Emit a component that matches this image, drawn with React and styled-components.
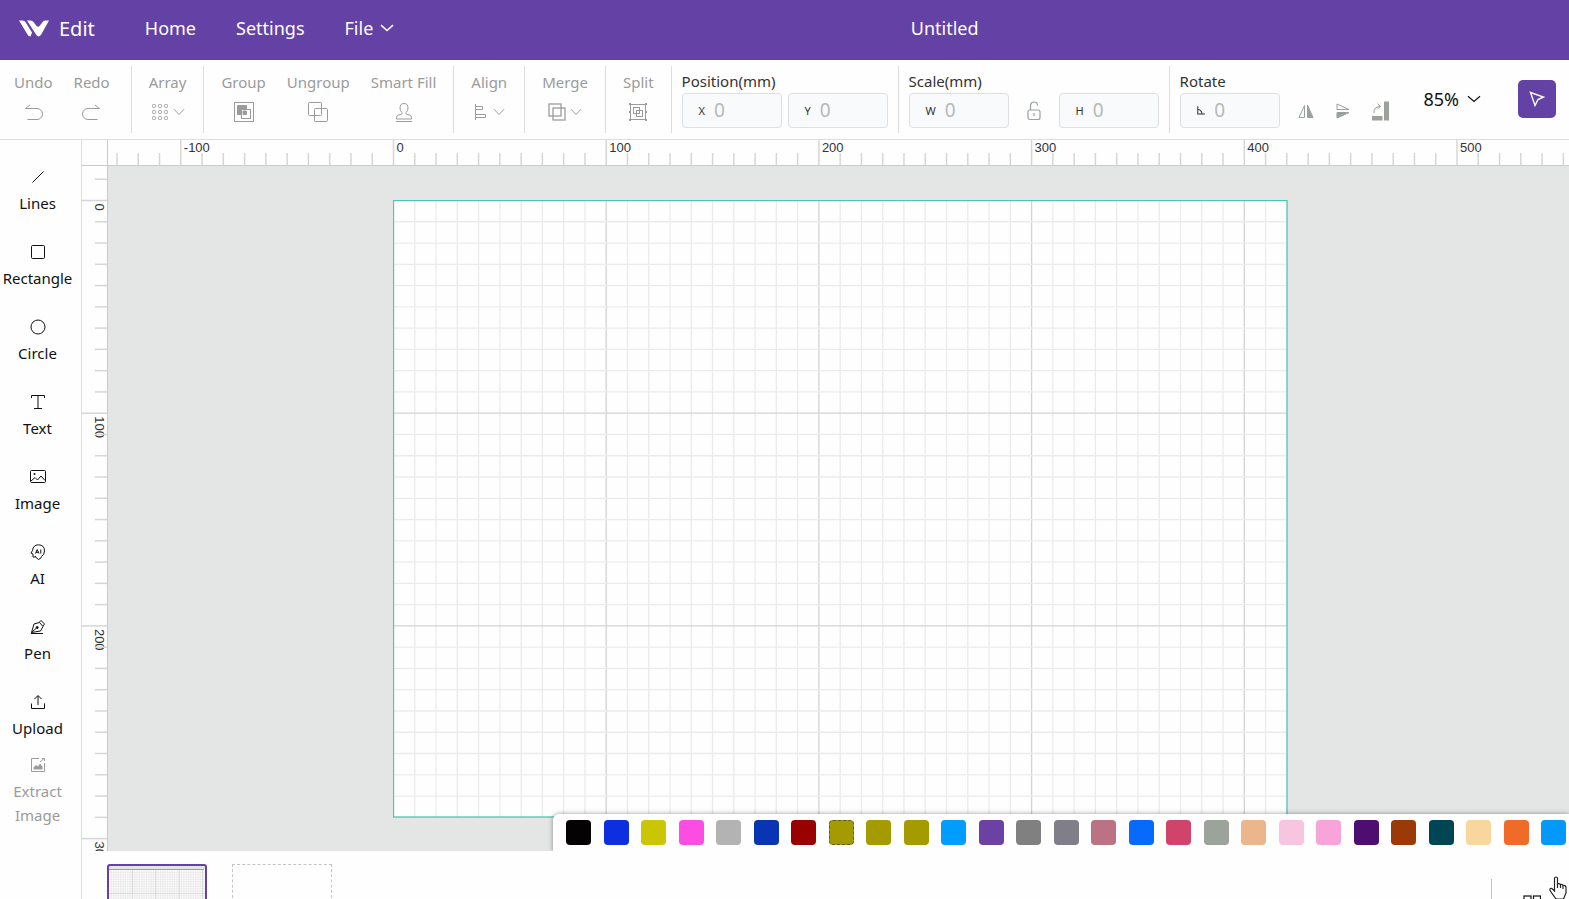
import React from "react";
import styled, { createGlobalStyle } from "styled-components";

//
const GlobalStyle = createGlobalStyle`
  * {
    box-sizing: border-box;
  }
  body {
    margin: 0;
    font-family: "Noto Sans", "Open Sans", sans-serif;
    color: #111;
    background: #fefefe;
    overflow: hidden;
  }
  button, input, select {
    font: inherit;
    color: inherit;
    background: none;
    border: none;
    padding: 0;
    margin: 0;
  }
  button {
    cursor: pointer;
  }
`;

const Container = styled.div`
  height: 100vh;
  display: flex;
  flex-direction: column;
`;

//
//          **    HEADER   ***
//
const Header = styled.header`
  flex: none;
  height: 60px;
  padding: 0 74px 4px 19px;
  background: #6441a5;
  color: #fff;
  display: flex;
  align-items: center;
  font-size: 18px;
`;

const Brand = styled.a`
  display: flex;
  align-items: center;
  gap: 10px;
  margin-right: 50px;
  font-size: 20px;
  color: inherit;
  text-decoration: none;
`;

const Menu = styled.nav`
  display: flex;
  align-items: center;
  gap: 40px;
`;

const MenuLink = styled.a`
  color: inherit;
  text-decoration: none;
`;

const MenuButton = styled.button`
  display: flex;
  align-items: center;
  gap: 7px;
`;

const DocTitle = styled.h1`
  flex: 1;
  margin: 0;
  font-size: 18px;
  font-weight: 400;
  text-align: center;
`;

//
//          **    TOOLBAR   ***
//
const Toolbar = styled.div`
  flex: none;
  height: 80px;
  padding: 6px 13px 6px 0;
  border-bottom: 1px solid #dddddf;
  display: flex;
`;

const ToolGroup = styled.div`
  display: flex;
  gap: 21px;
  padding: 0 17px;
  padding-left: ${(props) => (props.$first ? 14 : 17)}px;
  padding-right: ${(props) => (props.$first ? 21 : 17)}px;
  border-right: 1px solid #dddddf;
`;

const Tool = styled.button`
  display: flex;
  flex-direction: column;
  align-items: center;
  gap: 8px;
  padding-top: 5px;
  font-size: 15px;
  line-height: 22px;
  color: #9b9b9b;
  white-space: nowrap;
`;

const ToolIcon = styled.span`
  height: 22px;
  display: flex;
  align-items: center;
  gap: 4px;
`;

const FieldGroup = styled.div`
  flex: none;
  padding: 3px 10px 0;
  border-right: ${(props) => (props.$last ? "none" : "1px solid #dddddf")};
`;

const FieldTitle = styled.div`
  font-size: 15px;
  line-height: 24px;
  color: #333;
`;

const FieldRow = styled.div`
  display: flex;
  align-items: center;
  gap: ${(props) => props.$gap || 6}px;
`;

const Field = styled.label`
  width: 100px;
  height: 35px;
  padding-left: 16px;
  display: flex;
  align-items: center;
  gap: 9px;
  background: #f9fafc;
  border: 1px solid #dddfe6;
  border-radius: 4px;
  font-size: 11px;
  color: #333;
`;

const FieldInput = styled.input`
  width: 100%;
  min-width: 0;
  height: 30px;
  padding-bottom: 2px;
  font-size: 19px;
  color: #b5bab5;
  outline: none;
`;

const IconButton = styled.button`
  width: 22px;
  display: flex;
  justify-content: center;
  color: #9aa09a;
`;

const ToolbarEnd = styled.div`
  flex: 1;
  display: flex;
  align-items: center;
  justify-content: flex-end;
  gap: 37px;
  padding-bottom: 2px;
`;

const Zoom = styled.label`
  display: flex;
  align-items: center;
  gap: 8px;
  font-size: 18px;
`;

const ZoomSelect = styled.select`
  appearance: none;
  field-sizing: content;
  outline: none;
`;

const PointerButton = styled.button`
  width: 38px;
  height: 38px;
  border-radius: 5px;
  background: #6441a5;
  color: #fff;
  display: flex;
  align-items: center;
  justify-content: center;
`;

//
//          **    BODY   ***
//
const Body = styled.div`
  flex: 1;
  min-height: 0;
  display: flex;
`;

const Sidebar = styled.nav`
  flex: none;
  width: 82px;
  padding: 26px 6px 0 0;
  border-right: 1px solid #dddddf;
  display: flex;
  flex-direction: column;
`;

const SideItem = styled.button`
  flex: none;
  height: ${(props) => (props.$disabled ? 80 : 75)}px;
  margin-top: ${(props) => (props.$disabled ? "-12px" : "0")};
  display: flex;
  flex-direction: column;
  align-items: center;
  gap: 3px;
  font-size: 15px;
  line-height: 24px;
  color: ${(props) => (props.$disabled ? "#9b9b9b" : "#111")};
`;

const Main = styled.main`
  flex: 1;
  min-width: 0;
  display: flex;
  flex-direction: column;
`;

const Workspace = styled.div`
  flex: 1;
  min-height: 0;
  display: grid;
  grid-template: 26px minmax(0, 1fr) / 26px minmax(0, 1fr);
`;

const Corner = styled.div`
  border-right: 1px solid #c9cbcb;
  border-bottom: 1px solid #c9cbcb;
`;

const Ruler = styled.svg`
  display: block;
  width: 100%;
  height: 100%;
  overflow: hidden;
  font-size: 13px;
  font-family: "Liberation Sans", sans-serif;
  border-bottom: ${(props) => (props.$vertical ? "none" : "1px solid #c9cbcb")};
  border-right: ${(props) => (props.$vertical ? "1px solid #c9cbcb" : "none")};
`;

const Canvas = styled.div`
  position: relative;
  overflow: hidden;
  background: #e4e6e5;
`;

const Artboard = styled.svg`
  position: absolute;
  left: 285px;
  top: 34px;
  width: 895px;
  height: 618px;
`;

const Palette = styled.div`
  position: absolute;
  right: 0;
  bottom: 0;
  width: 1016px;
  max-width: 100%;
  height: 37px;
  padding: 0 3px 0 13px;
  display: flex;
  align-items: center;
  justify-content: space-between;
  background: #fefefe;
  border-radius: 6px 0 0 0;
  box-shadow: 0 0 5px rgba(0, 0, 0, 0.4);
`;

const Swatch = styled.button`
  width: 25px;
  height: 25px;
  border-radius: 4px;
  background: ${(props) => props.$color};
  border: ${(props) => (props.$active ? "1px dashed #5c5a20" : "none")};
`;

const Pages = styled.div`
  flex: none;
  height: 48px;
  padding: 13px 28px 0 25px;
  display: flex;
  gap: 25px;
  overflow: hidden;
`;

const PageThumb = styled.button`
  flex: none;
  width: 100px;
  height: 70px;
  display: flex;
  align-items: flex-start;
  overflow: hidden;
  border: ${(props) => (props.$empty ? "1px dashed #c4c4c4" : "2px solid #6441a5")};
  border-radius: ${(props) => (props.$empty ? 0 : 3)}px;
  background: ${(props) => (props.$empty ? "none" : "#e4e6e5")};
`;

const PagesEnd = styled.div`
  height: 50px;
  margin: 15px 0 0 auto;
  padding: 16px 0 0 31px;
  border-left: 1px solid #c4c4c4;
`;

const Cursor = styled.svg`
  position: fixed;
  right: 2px;
  bottom: 0;
  width: 18px;
  height: 23px;
`;

//
//          **    ICONS   ***
//
const Icon = ({ w = 22, h = 22, sw = 1, children }) => (
  <svg
    width={w}
    height={h}
    viewBox={`0 0 ${w} ${h}`}
    fill="none"
    stroke="currentColor"
    strokeWidth={sw}
    aria-hidden="true"
  >
    {children}
  </svg>
);

const Chevron = ({ w = 12, sw = 1 }) => (
  <Icon w={w} h={8} sw={sw}>
    <path d={`M1 1.2 L${w / 2} 6.5 L${w - 1} 1.2`} />
  </Icon>
);

const icons = {
  undo: (
    <Icon>
      <path d="M8 4 L3.5 7.5 H15 a5.5 5.5 0 0 1 0 11 H5.5" />
    </Icon>
  ),
  redo: (
    <Icon>
      <path d="M14 4 L18.5 7.5 H7 a5.5 5.5 0 0 0 0 11 H16.5" />
    </Icon>
  ),
  array: (
    <Icon w={18}>
      {[3.5, 9.5, 15.5].map((y) =>
        [2.5, 8.5, 14.5].map((x) => (
          <rect key={x + "-" + y} x={x - 1} y={y} width="3" height="3" rx="1" />
        ))
      )}
    </Icon>
  ),
  group: (
    <Icon>
      <rect x="1.5" y="1.5" width="19" height="19" />
      <path d="M4.500 4.500 h9 v4 h-5 v5 h-4 z M10 10 h3.500 v3.500 h-3.500z" fill="currentColor" />
      <rect x="8.5" y="8.5" width="9" height="9" />
    </Icon>
  ),
  ungroup: (
    <Icon>
      <rect x="1.5" y="1.5" width="13" height="13" rx="1" />
      <rect x="7.5" y="7.5" width="13" height="13" rx="1" />
    </Icon>
  ),
  fill: (
    <Icon>
      <path d="M3 20.5 H19 M3.5 18 v-1.5 q0-2 2-2.5 l2.5-.5 q1.5-.5 1-2 q-2-1.5-2-4.5 q0-4.5 4-4.5 t4 4.5 q0 3-2 4.5 q-.5 1.5 1 2 l2.5.5 q2 .5 2 2.5 V18 z" />
    </Icon>
  ),
  align: (
    <Icon w={16}>
      <path d="M2.5 3 V19 M2.5 5.5 H9.5 V8.5 H2.5 M2.5 13.5 H12.5 V16.5 H2.5" />
    </Icon>
  ),
  merge: (
    <Icon w={18} sw={1.3}>
      <rect x="1" y="3" width="12" height="12" />
      <rect x="5" y="7" width="12" height="12" />
    </Icon>
  ),
  split: (
    <Icon>
      <rect x="3.5" y="3.5" width="15" height="15" />
      <rect x="6.5" y="6.5" width="6" height="6" />
      <rect x="9.5" y="9.5" width="6" height="6" />
      <path d="M2 3h2M18 3h2M2 19h2M18 19h2M2 11h2M18 11h2" strokeWidth="2" />
    </Icon>
  ),
  lines: (
    <Icon w={16} h={16}>
      <path d="M2.5 13.5 L13.500 2.5" />
    </Icon>
  ),
  rectangle: (
    <Icon w={16} h={16}>
      <rect x="1.5" y="1.5" width="13" height="13" rx="1" />
    </Icon>
  ),
  circle: (
    <Icon w={16} h={16}>
      <circle cx="8" cy="8" r="7" />
    </Icon>
  ),
  text: (
    <Icon w={16} h={16}>
      <path d="M1.5 4 V1.5 H14.5 V4 M8 1.5 V14.5 M4 14.5 H12" />
    </Icon>
  ),
  image: (
    <Icon w={16} h={16}>
      <rect x="0.5" y="1.5" width="15" height="12" rx="1" />
      <path d="M1 12 L5 8.5 L7.5 11 L11 7 L15 11.5" />
      <circle cx="4.5" cy="5" r="1" fill="currentColor" stroke="none" />
    </Icon>
  ),
  ai: (
    <Icon w={16} h={16}>
      <path d="M5.5 12 V13 H3 V10 L1 9 L2.5 6.5 Q3 1 8.5 .8 Q14.5 1 14.5 7 Q14.5 10.5 11.5 12.5 Q11.5 14.5 8.5 15.500 L5.5 13" />
      <path d="M5.5 9.5 L7.2 5.5 L9 9.5 M6 8.3 H8.5 M10.8 5.5 V9.5" />
    </Icon>
  ),
  pen: (
    <Icon w={16} h={16}>
      <path d="M1 14.5 H13 M1.5 13.5 L4 5 L9.5 3.5 L13 7.5 L10.5 12 L1.5 13.5 L6.5 9 M9 3.5 L11 1.5 L14.5 5 L12.8 7.2" />
      <circle cx="7.2" cy="8.5" r="1" fill="currentColor" />
    </Icon>
  ),
  upload: (
    <Icon w={16} h={16}>
      <path d="M8 11 V2 M4.5 5 L8 1.5 L11.5 5 M1.5 9.5 V14.5 H14.5 V9.5" />
    </Icon>
  ),
  extract: (
    <Icon w={16} h={16}>
      <path d="M9 1.5 H1.5 V14.5 H14.5 V6 M10 5 L14 1.5 M12 1.5 H14.5 V4" />
      <path d="M3.5 12.500 V10.500 L6 8 L8 9.500 L10 6.500 L12.500 9.500 V12.500 Z" fill="currentColor" stroke="none" />
    </Icon>
  ),
};

//
//          **    DATA   ***
//
const toolGroups = [
  [["Undo", "undo"], ["Redo", "redo"]],
  [["Array", "array", true]],
  [["Group", "group"], ["Ungroup", "ungroup"], ["Smart Fill", "fill"]],
  [["Align", "align", true]],
  [["Merge", "merge", true]],
  [["Split", "split"]],
];

const sideItems = [
  ["Lines", "lines"],
  ["Rectangle", "rectangle"],
  ["Circle", "circle"],
  ["Text", "text"],
  ["Image", "image"],
  ["AI", "ai"],
  ["Pen", "pen"],
  ["Upload", "upload"],
];

const colors = [
  "#050203", "#0d2fdf", "#cac603", "#fb4de2", "#b3b3b3", "#0934b3", "#990000",
  "#a39b00", "#a39b00", "#a39b00", "#009dff", "#6b41a3", "#808080", "#807e89",
  "#bb7285", "#066afa", "#d0446b", "#9ba39a", "#ebb68b", "#f8c5e0", "#f9a4d8",
  "#4d0e6f", "#9b3a06", "#004553", "#f8d79e", "#f06b28", "#0399fa",
];

// one ruler step is 10mm
const STEP = 21.27;

const ticks = (from, to, origin) => {
  const list = [];
  for (let i = from; i <= to; i++) {
    list.push({ mm: i * 10, at: origin + i * STEP, major: i % 10 === 0 });
  }
  return list;
};

const TopRuler = () => (
  <Ruler aria-hidden="true">
    {ticks(-13, 55, 285.5).map((t) => (
      <g key={t.mm}>
        <path d={`M${t.at} ${t.major ? 0 : 13} V26`} stroke="#d6d6d6" strokeWidth="1.5" />
        {t.major && (
          <text x={t.at + 3} y="12" fill="#333">
            {t.mm}
          </text>
        )}
      </g>
    ))}
  </Ruler>
);

const LeftRuler = () => (
  <Ruler $vertical aria-hidden="true">
    {ticks(-1, 31, 34.5).map((t) => (
      <g key={t.mm}>
        <path d={`M${t.major ? 0 : 13} ${t.at} H26`} stroke="#d6d6d6" strokeWidth="1.5" />
        {t.major && (
          <text transform={`translate(13 ${t.at + 3}) rotate(90)`} fill="#333">
            {t.mm}
          </text>
        )}
      </g>
    ))}
  </Ruler>
);

const Board = () => (
  <Artboard viewBox="0 0 895 618">
    <rect x="0.5" y="0.5" width="893.5" height="616.5" fill="#fefefe" />
    {ticks(1, 41, 0.5).map((t) => (
      <path key={t.mm} d={`M${t.at} 1 V617`} stroke={t.major ? "#d3d3d3" : "#ebebeb"} strokeWidth="1.3" />
    ))}
    {ticks(1, 28, 0.5).map((t) => (
      <path key={t.mm} d={`M1 ${t.at} H893`} stroke={t.major ? "#d3d3d3" : "#ebebeb"} strokeWidth="1.3" />
    ))}
    <rect x="0.5" y="0.5" width="893.5" height="616.5" fill="none" stroke="#4fc4b0" strokeWidth="1.3" />
  </Artboard>
);

const ThumbGrid = () => (
  <svg width="96" height="66" viewBox="0 0 96 66" aria-hidden="true">
    <rect y="3" width="96" height="63" fill="#fdfdfd" />
    {ticks(1, 41, 0).map((t) => (
      <path
        key={t.mm}
        d={`M${t.at * 0.11} 4 V66 M0 ${4 + t.at * 0.11} H96`}
        stroke={t.major ? "#c8c8c8" : "#e6e6e6"}
        strokeWidth="0.7"
      />
    ))}
    <path d="M0 3.5 H95" stroke="#4fc4b0" />
  </svg>
);

const NumberField = ({ label, name }) => (
  <Field>
    {label}
    <FieldInput defaultValue="0" aria-label={name} />
  </Field>
);

//
//
//
const App = () => {
  return (
    <Container>
      <GlobalStyle />
      <Header>
        <Brand href="#">
          <svg width="30" height="17" viewBox="0 0 30 17" fill="#fff" aria-hidden="true">
            <path d="M0 .5 H3.5 Q5.500 .5 6.500 2 L13 12.500 L11.500 16.500 Q9.500 16.500 8.500 14.500 Z" />
            <path d="M8 .5 H11.500 Q13.500 .5 14.500 2 L17.500 6 Q19 7.500 20.500 6 L24 1.500 Q25 .5 26.500 .5 H30 L22.500 14 Q20 18.500 17 14.500 Z" />
          </svg>
          Edit
        </Brand>
        <Menu>
          <MenuLink href="#">Home</MenuLink>
          <MenuLink href="#">Settings</MenuLink>
          <MenuButton>
            File
            <Chevron w={14} sw={1.6} />
          </MenuButton>
        </Menu>
        <DocTitle>Untitled</DocTitle>
      </Header>

      <Toolbar>
        {toolGroups.map((tools, i) => (
          <ToolGroup key={i} $first={i === 0}>
            {tools.map(([label, icon, more]) => (
              <Tool key={label}>
                {label}
                <ToolIcon>
                  {icons[icon]}
                  {more && <Chevron />}
                </ToolIcon>
              </Tool>
            ))}
          </ToolGroup>
        ))}
        <FieldGroup>
          <FieldTitle>Position(mm)</FieldTitle>
          <FieldRow>
            <NumberField label="X" name="X position" />
            <NumberField label="Y" name="Y position" />
          </FieldRow>
        </FieldGroup>
        <FieldGroup>
          <FieldTitle>Scale(mm)</FieldTitle>
          <FieldRow $gap={14}>
            <NumberField label="W" name="Width" />
            <IconButton aria-label="Lock ratio">
              <Icon w={14} h={20} sw={1.2}>
                <rect x="1" y="9" width="12" height="9.500" rx="2" />
                <path d="M3.500 9 V4.500 a3.500 3.500 0 0 1 7 0 M7 12 V15" />
              </Icon>
            </IconButton>
            <NumberField label="H" name="Height" />
          </FieldRow>
        </FieldGroup>
        <FieldGroup $last>
          <FieldTitle>Rotate</FieldTitle>
          <FieldRow $gap={15}>
            <NumberField
              name="Rotate"
              label={
                <Icon w={11} h={11} sw={1.3}>
                  <path d="M1 0 V10 H11 M1 4 Q6 5 6.5 10" />
                </Icon>
              }
            />
            <IconButton aria-label="Flip horizontally">
              <Icon w={16} h={18}>
                <path d="M6.5 3.5 V15.5 H1 Z" />
                <path d="M9.5 3 V15.5 H15 Z" fill="currentColor" />
              </Icon>
            </IconButton>
            <IconButton aria-label="Flip vertically">
              <Icon w={18} h={18}>
                <path d="M3 2 V7.5 H15 Z" />
                <path d="M3 16 V10.5 H15 Z" fill="currentColor" />
              </Icon>
            </IconButton>
            <IconButton aria-label="Rotate 90 degrees">
              <Icon w={18} h={20}>
                <path d="M13 0.5 H18 V19.5 H13 Z M1 15 H11.5 V19.5 H1 Z" fill="currentColor" stroke="none" />
                <path d="M3 12 Q2.5 6 9 5.5 M6.5 2.5 L9.5 5.5 L6.500 8" />
              </Icon>
            </IconButton>
          </FieldRow>
        </FieldGroup>
        <ToolbarEnd>
          <Zoom>
            <ZoomSelect defaultValue="85%" aria-label="Zoom">
              <option>85%</option>
            </ZoomSelect>
            <Chevron w={14} sw={1.2} />
          </Zoom>
          <PointerButton aria-label="Select">
            <Icon w={18} h={18} sw={1.4}>
              <path d="M2.5 2.5 L15.5 7 L10 9.5 L7 15.5 Z" />
            </Icon>
          </PointerButton>
        </ToolbarEnd>
      </Toolbar>

      <Body>
        <Sidebar>
          {sideItems.map(([label, icon]) => (
            <SideItem key={label}>
              <ToolIcon>{icons[icon]}</ToolIcon>
              {label}
            </SideItem>
          ))}
          <SideItem $disabled>
            <ToolIcon>{icons.extract}</ToolIcon>
            Extract Image
          </SideItem>
        </Sidebar>
        <Main>
          <Workspace>
            <Corner />
            <TopRuler />
            <LeftRuler />
            <Canvas>
              <Board />
              <Palette>
                {colors.map((color, i) => (
                  <Swatch key={i} $color={color} $active={i === 7} aria-label={color} />
                ))}
              </Palette>
            </Canvas>
          </Workspace>
          <Pages>
            <PageThumb aria-label="Page 1">
              <ThumbGrid />
            </PageThumb>
            <PageThumb $empty aria-label="Add page" />
            <PagesEnd>
              <Icon w={18} h={18} sw={1.2}>
                <rect x="1" y="1" width="7" height="7" />
                <rect x="10.5" y="1" width="7" height="7" />
              </Icon>
            </PagesEnd>
          </Pages>
        </Main>
      </Body>
      <Cursor viewBox="0 0 18 23" fill="#fff" stroke="#222" strokeWidth="1.2" aria-hidden="true">
        <path d="M5.5 15 V2.5 q0-1.5 1.5-1.5 t1.5 1.5 V8 q1.5-1 3 .5 q2-.5 2.5 1 q2.5-.5 3 1.5 V17 L14.5 23 H7 L1 14.5 q-.5-2.5 2-2 z M8.5 8 v4 M11.5 9 v3 M14 10 v3" />
      </Cursor>
    </Container>
  );
};

export default App;
